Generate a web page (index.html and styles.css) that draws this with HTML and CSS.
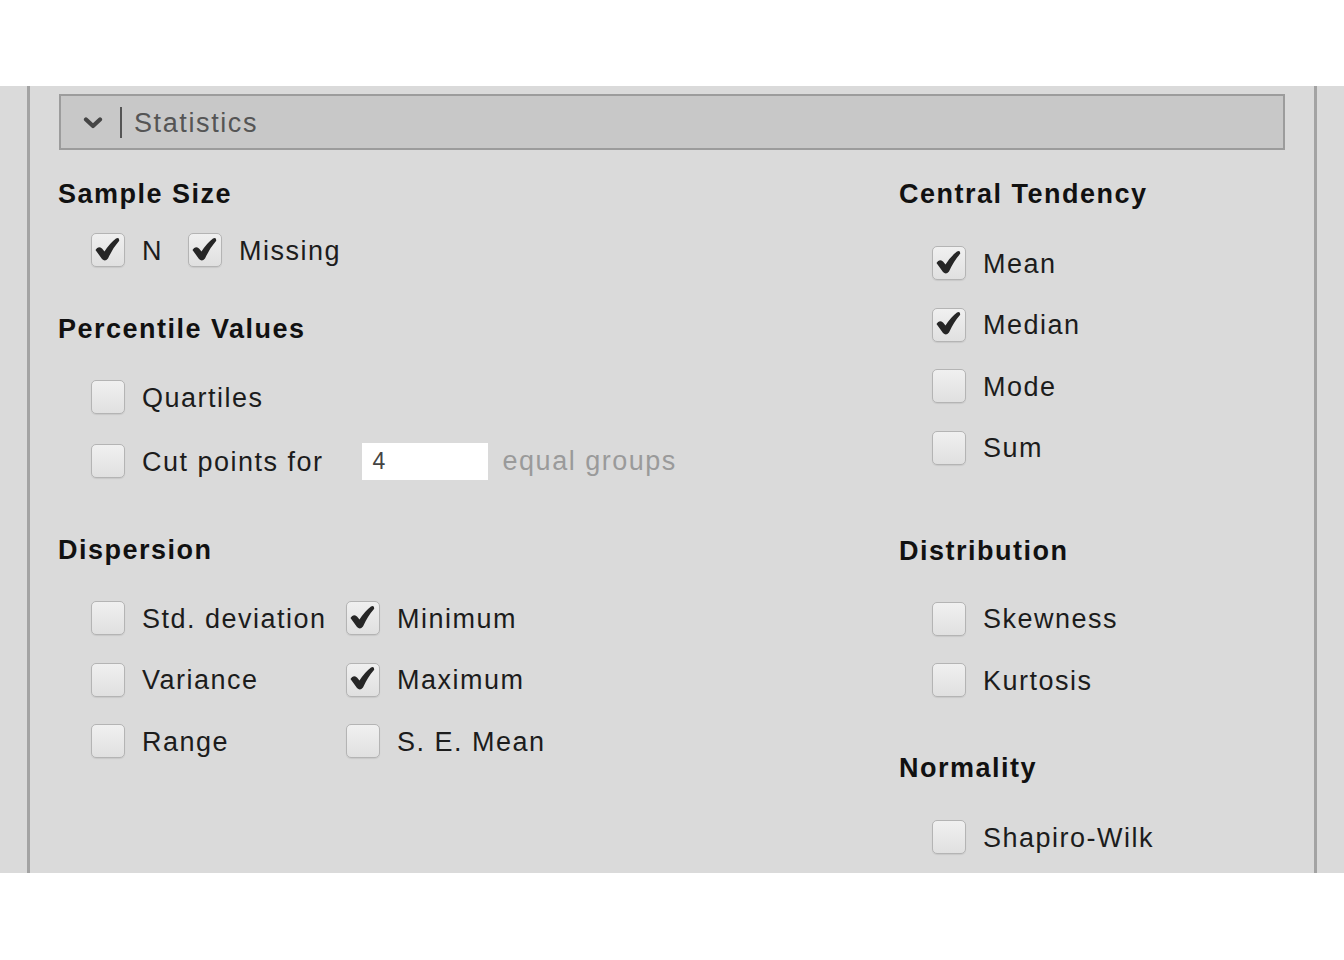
FILE: index.html
```html
<!DOCTYPE html>
<html>
<head>
<meta charset="utf-8">
<link rel="stylesheet" href="styles.css">
</head>
<body>
<div class="panel">
  <div class="frame">
    <div class="header">
      <svg class="chev" width="20" height="12" viewBox="0 0 20 12"><path d="M3 2.5 L10 9 L17 2.5" fill="none" stroke="#454545" stroke-width="4.2" stroke-linecap="round" stroke-linejoin="round"/></svg>
      <span class="sep"></span>
      <span class="htitle">Statistics</span>
    </div>
    <div class="cols">
      <div class="col">
        <div class="title t-first">Sample Size</div>
        <div class="row r-ss">
          <span class="cb on"><svg viewBox="0 0 34 34"><path d="M4.5 17 Q7 12.5 11 15.5 L13.5 18.5 Q18.5 10.5 25 5.5 Q28.5 4 28.2 7.8 Q21.8 15 17 25.5 Q14 29 11 26 Z" fill="#262626"/></svg></span>
          <span class="lbl">N</span>
          <span class="cb on cb-next"><svg viewBox="0 0 34 34"><path d="M4.5 17 Q7 12.5 11 15.5 L13.5 18.5 Q18.5 10.5 25 5.5 Q28.5 4 28.2 7.8 Q21.8 15 17 25.5 Q14 29 11 26 Z" fill="#262626"/></svg></span>
          <span class="lbl">Missing</span>
        </div>
        <div class="title t-pv">Percentile Values</div>
        <div class="row r-q"><span class="cb"></span><span class="lbl">Quartiles</span></div>
        <div class="row r-cut">
          <span class="cb"></span><span class="lbl">Cut points for</span>
          <span class="input">4</span>
          <span class="hint">equal groups</span>
        </div>
        <div class="title t-disp">Dispersion</div>
        <div class="grid2">
          <div class="row"><span class="cb"></span><span class="lbl">Std. deviation</span></div>
          <div class="row"><span class="cb on"><svg viewBox="0 0 34 34"><path d="M4.5 17 Q7 12.5 11 15.5 L13.5 18.5 Q18.5 10.5 25 5.5 Q28.5 4 28.2 7.8 Q21.8 15 17 25.5 Q14 29 11 26 Z" fill="#262626"/></svg></span><span class="lbl">Minimum</span></div>
          <div class="row"><span class="cb"></span><span class="lbl">Variance</span></div>
          <div class="row"><span class="cb on"><svg viewBox="0 0 34 34"><path d="M4.5 17 Q7 12.5 11 15.5 L13.5 18.5 Q18.5 10.5 25 5.5 Q28.5 4 28.2 7.8 Q21.8 15 17 25.5 Q14 29 11 26 Z" fill="#262626"/></svg></span><span class="lbl">Maximum</span></div>
          <div class="row"><span class="cb"></span><span class="lbl">Range</span></div>
          <div class="row"><span class="cb"></span><span class="lbl">S. E. Mean</span></div>
        </div>
      </div>
      <div class="col">
        <div class="title t-first">Central Tendency</div>
        <div class="list l-ct">
          <div class="row"><span class="cb on"><svg viewBox="0 0 34 34"><path d="M4.5 17 Q7 12.5 11 15.5 L13.5 18.5 Q18.5 10.5 25 5.5 Q28.5 4 28.2 7.8 Q21.8 15 17 25.5 Q14 29 11 26 Z" fill="#262626"/></svg></span><span class="lbl">Mean</span></div>
          <div class="row"><span class="cb on"><svg viewBox="0 0 34 34"><path d="M4.5 17 Q7 12.5 11 15.5 L13.5 18.5 Q18.5 10.5 25 5.5 Q28.5 4 28.2 7.8 Q21.8 15 17 25.5 Q14 29 11 26 Z" fill="#262626"/></svg></span><span class="lbl">Median</span></div>
          <div class="row"><span class="cb"></span><span class="lbl">Mode</span></div>
          <div class="row"><span class="cb"></span><span class="lbl">Sum</span></div>
        </div>
        <div class="title t-dist">Distribution</div>
        <div class="list l-dist">
          <div class="row"><span class="cb"></span><span class="lbl">Skewness</span></div>
          <div class="row"><span class="cb"></span><span class="lbl">Kurtosis</span></div>
        </div>
        <div class="title t-norm">Normality</div>
        <div class="list l-norm">
          <div class="row"><span class="cb"></span><span class="lbl">Shapiro-Wilk</span></div>
        </div>
      </div>
    </div>
  </div>
</div>
</body>
</html>
```

FILE: styles.css
```css
html, body {
  margin: 0;
  padding: 0;
  background: #ffffff;
}
body {
  font-family: "Liberation Sans", Arial, sans-serif;
  color: #1c1c1c;
}
.panel {
  margin-top: 86px;
  height: 787px;
  background: #dadada;
  padding: 0 27px;
  box-sizing: border-box;
  overflow: hidden;
}
.frame {
  height: 100%;
  border-left: 3px solid #a3a3a3;
  border-right: 3px solid #a3a3a3;
  padding: 8px 29px 0 29px;
  box-sizing: border-box;
}
.header {
  height: 56px;
  box-sizing: border-box;
  border: 2px solid #9c9c9c;
  background: #c8c8c8;
  display: flex;
  align-items: center;
  padding-left: 22px;
}
.chev {
  display: block;
  margin-top: 2px;
}
.sep {
  width: 2px;
  height: 31px;
  background: #555;
  margin-left: 17px;
  margin-right: 12px;
}
.htitle {
  font-size: 27px;
  letter-spacing: 1.6px;
  color: #555555;
  padding-top: 2px;
}
.cols {
  display: grid;
  grid-template-columns: 841px 1fr;
  margin-left: -1px;
}
.col {
  display: flex;
  flex-direction: column;
  align-items: flex-start;
}
.title {
  font-weight: bold;
  font-size: 27px;
  letter-spacing: 1.5px;
  line-height: 34px;
  color: #111;
}
.t-first { margin-top: 27px; }
.t-pv { margin-top: 44px; }
.t-disp { margin-top: 54px; }
.t-dist { margin-top: 68px; }
.t-norm { margin-top: 53px; }
.row {
  display: flex;
  align-items: center;
  height: 36px;
  padding-left: 33px;
}
.r-ss { margin-top: 21px; }
.r-q { margin-top: 33px; }
.r-cut { margin-top: 28px; }
.cb {
  width: 34px;
  height: 34px;
  box-sizing: border-box;
  border: 1.5px solid #b4b4b4;
  border-radius: 5px;
  background: linear-gradient(#f0f0f0, #e0e0e0);
  box-shadow: 0 1px 1px rgba(0, 0, 0, 0.08);
  flex: none;
  position: relative;
}
.cb svg {
  position: absolute;
  left: -1.5px;
  top: -1.5px;
  width: 34px;
  height: 34px;
}
.cb-next { margin-left: 25px; }
.lbl {
  font-size: 27px;
  letter-spacing: 1.5px;
  margin-left: 17px;
  padding-top: 2px;
  white-space: nowrap;
}
.input {
  width: 126px;
  height: 37px;
  box-sizing: border-box;
  background: #ffffff;
  margin-left: 38px;
  font-size: 23px;
  color: #444;
  padding-left: 11px;
  display: flex;
  align-items: center;
}
.hint {
  font-size: 27px;
  letter-spacing: 1.5px;
  color: #9a9a9a;
  margin-left: 15px;
  white-space: nowrap;
}
.grid2 {
  margin-top: 33px;
  display: grid;
  grid-template-columns: 288px auto;
  row-gap: 25.5px;
}
.grid2 .row:nth-child(even) { padding-left: 0; }
.list {
  display: flex;
  flex-direction: column;
  row-gap: 25.5px;
}
.l-ct { margin-top: 34px; }
.l-dist { margin-top: 33px; }
.l-norm { margin-top: 34px; }
```
